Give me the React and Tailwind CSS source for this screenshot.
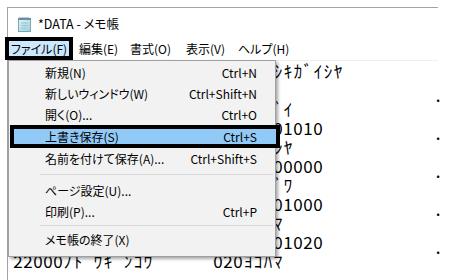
import React from "react";

const lines = [
  "21000ﾄｳｷﾖｳ ｼﾖｳｼﾞ".padEnd(23) + "ｶﾌﾞｼｷｶﾞｲｼﾔ",
  "".padEnd(42) + ".",
  "10100ｵｵｻｶ ｼﾝﾖｳ".padEnd(25) + "ﾀﾞｲ",
  "".padEnd(26) + "01010".padEnd(16) + ".",
  "10200ﾅｺﾞﾔ ｼﾖｳｶｲ".padEnd(26) + "ｼﾔ",
  "".padEnd(26) + "00000".padEnd(16) + ".",
  "10300ﾌｸｵｶ ｵ".padEnd(25) + "ｻﾞﾜ",
  "".padEnd(26) + "01000".padEnd(16) + ".",
  "10400ｻﾂﾎﾟﾛ ﾔ".padEnd(25) + "ﾔﾏ",
  "".padEnd(26) + "01020".padEnd(16) + ".",
  "22000ﾉﾄﾞｳｷﾞﾝｺｳ".padEnd(20) + "020ﾖｺﾊﾏ",
];

const items = [
  { label: "新規(N)", key: "Ctrl+N" },
  { label: "新しいウィンドウ(W)", key: "Ctrl+Shift+N" },
  { label: "開く(O)...", key: "Ctrl+O" },
  { label: "上書き保存(S)", key: "Ctrl+S", active: true },
  { label: "名前を付けて保存(A)...", key: "Ctrl+Shift+S" },
  { sep: true, h: "h-[11px] pt-[5px]" },
  { label: "ページ設定(U)...", key: "" },
  { label: "印刷(P)...", key: "Ctrl+P" },
  { sep: true, h: "h-[7px] pt-[3px]" },
  { label: "メモ帳の終了(X)", key: "" },
];

function TextLine({ text }) {
  return (
    <div className="flex h-[19px] items-center">
      {Array.from(text).map((c, i) =>
        c === "." ? (
          <span key={i} className="w-[10px] shrink-0 self-end text-center text-[13px] font-bold leading-[4px]">
            .
          </span>
        ) : (
          <span key={i} className="w-[10px] shrink-0 text-center">
            {c === " " ? "\u00a0" : c}
          </span>
        )
      )}
    </div>
  );
}

function NotepadIcon() {
  return (
    <svg width="16" height="15" viewBox="0 0 16 15">
      <defs>
        <linearGradient id="pg" x1="0" y1="0" x2="1" y2="1">
          <stop offset="0" stopColor="#dff3f6" />
          <stop offset="1" stopColor="#9ccfdc" />
        </linearGradient>
      </defs>
      <rect x="1.5" y="2.5" width="12" height="12" fill="url(#pg)" stroke="#7aa8b8" />
      <rect x="1" y="1" width="13" height="2" fill="#6b8ea3" />
      <path d="M3 1v-1M5 1v-1M7 1v-1M9 1v-1M11 1v-1" stroke="#8a98a2" />
      <path d="M4 6h7M4 8.5h7M4 11h5" stroke="#8cbccb" strokeWidth="0.8" />
    </svg>
  );
}

export default function App() {
  return (
    <div
      className="relative h-[280px] w-[452px] overflow-hidden bg-white pl-[7px] pt-[7px] text-black"
      style={{ fontFamily: '"Noto Sans CJK JP", "Noto Sans", sans-serif' }}
    >
      <div className="relative h-[273px] w-[431px] border-l border-t border-[#a3a3a3]">
        {/* title bar */}
        <div className="flex h-[29px] items-center gap-[5px] pl-[9px] pt-[3px] text-[12.5px] [font-feature-settings:'palt']">
          <NotepadIcon />
          <span>*DATA - メモ帳</span>
        </div>

        {/* menu bar */}
        <div className="flex h-[23px] items-stretch text-[12px] [font-feature-settings:'palt']">
          <div className="-ml-[3px] flex w-[68px] items-center justify-center border-4 border-black bg-[#cce8ff]">
            ファイル(F)
          </div>
          <div className="flex w-[51px] items-center pl-[6px]">編集(E)</div>
          <div className="flex w-[56px] items-center pl-[6px]">書式(O)</div>
          <div className="flex w-[52px] items-center pl-[6px]">表示(V)</div>
          <div className="flex items-center pl-[6px]">ヘルプ(H)</div>
        </div>

        {/* text area */}
        <div className="border-t border-[#efefef] pl-[5px] text-[17px] leading-[19px]">
          {lines.map((l, i) => (
            <TextLine key={i} text={l} />
          ))}
        </div>

        {/* file menu */}
        <div className="absolute left-0 top-[52px] h-[197px] w-[268px] border border-[#a0a0a0] bg-[#f2f2f2] pt-[1px] text-[12px] shadow-[2px_2px_3px_rgba(0,0,0,0.35)] [font-feature-settings:'palt']">
          {items.map((it, i) =>
            it.sep ? (
              <div key={i} className={it.h}>
                <div className="ml-[31px] mr-[2px] h-px bg-[#d7d7d7]" />
              </div>
            ) : it.active ? (
              <div
                key={i}
                className="ml-[1px] flex h-[23px] w-[270px] items-center justify-between border-4 border-black bg-[#91c9f7] pl-[31px] pr-[19px]"
              >
                <span>{it.label}</span>
                <span>{it.key}</span>
              </div>
            ) : (
              <div key={i} className="flex h-[21px] items-center justify-between pl-[36px] pr-[18px]">
                <span>{it.label}</span>
                <span>{it.key}</span>
              </div>
            )
          )}
        </div>
      </div>
    </div>
  );
}
